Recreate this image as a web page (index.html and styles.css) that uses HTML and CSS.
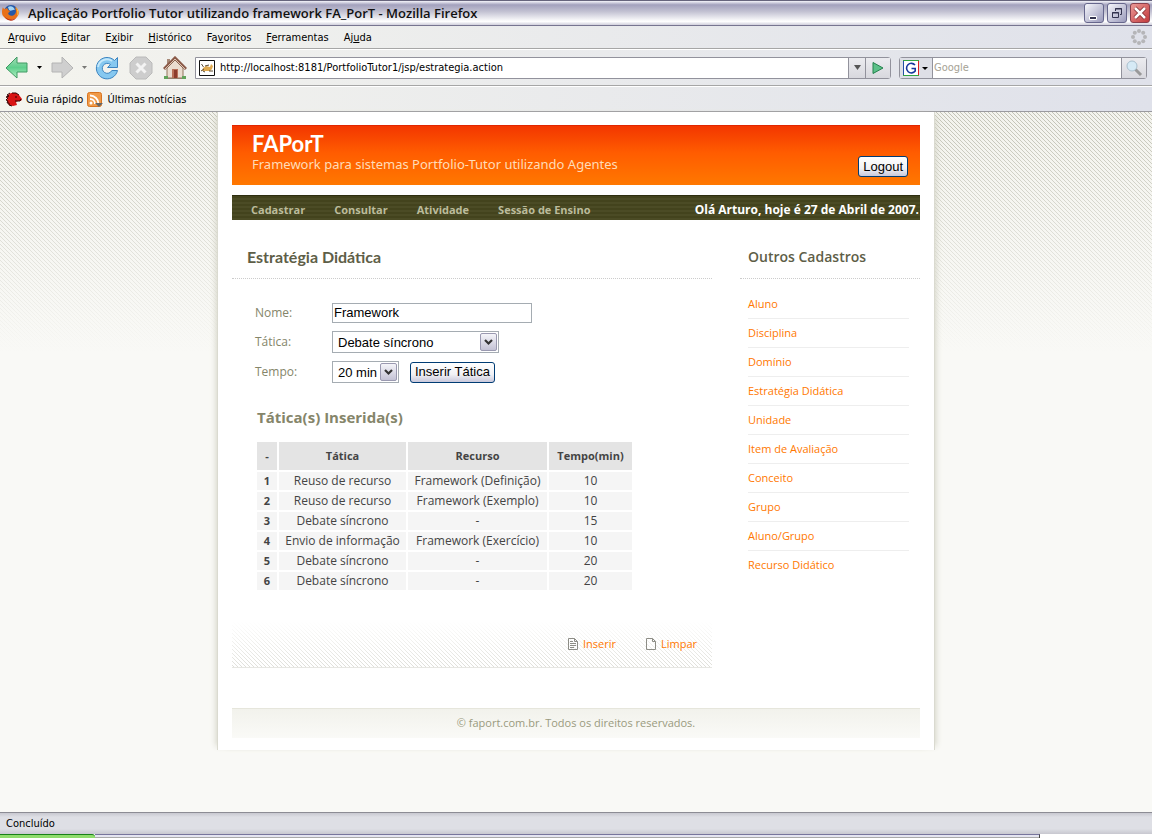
FILE: index.html
```html
<!DOCTYPE html>
<html lang="pt-BR">
<head>
<meta charset="utf-8">
<title>Aplicação Portfolio Tutor utilizando framework FA_PorT</title>
<link rel="stylesheet" href="styles.css">
</head>
<body>
<header class="chrome">
  <div class="titlebar">
    <svg class="ff" width="18" height="18" viewBox="0 0 18 18" aria-hidden="true"><circle cx="9" cy="8" r="7" fill="#2458a8"/><path d="M6 3c3-2 6 0 7 3-2-1-4 2-6 0z" fill="#a4d4f4"/><path d="M1 3c0 1 1 2 2 2 1-1 3-1 3 1l2 1c-1 2-3 2-1 4 3 2 7 0 7-4l-1-4c4 2 5 7 2 10-3 4-10 4-13 0C-1 11 0 5 1 3z" fill="#e8701a"/><path d="M2 12c3 4 9 5 13 1-3 5-10 5-13-1z" fill="#b92c10"/><path d="M14 3c3 3 3 7 1 9 1-3 0-6-1-9z" fill="#ffc93c"/></svg>
    <span class="title">Aplicação Portfolio Tutor utilizando framework FA_PorT - Mozilla Firefox</span>
    <button class="win" aria-label="Minimizar"><svg width="18" height="18" viewBox="0 0 18 18"><path d="M4.500 12.500h7v3h-7z" fill="#33334f" stroke="#fff"/></svg></button>
    <button class="win" aria-label="Restaurar"><svg width="18" height="18" viewBox="0 0 18 18" fill="none" stroke="#33334f"><path d="M7.500 7V4.500h6v6H12M7 5h7" /><path d="M4.500 8.500h6v5h-6zM4 9h7"/></svg></button>
    <button class="win close" aria-label="Fechar"><svg width="18" height="18" viewBox="0 0 18 18"><path d="M4 4l10 10M14 4L4 14" stroke="#7b2528" stroke-width="4"/><path d="M4 4l10 10M14 4L4 14" stroke="#fff" stroke-width="2.600"/></svg></button>
  </div>
  <nav class="menubar" aria-label="Menu do navegador">
    <button><u>A</u>rquivo</button><button><u>E</u>ditar</button><button>E<u>x</u>ibir</button><button><u>H</u>istórico</button><button>Fa<u>v</u>oritos</button><button><u>F</u>erramentas</button><button>Aj<u>u</u>da</button>
    <svg class="throbber" width="18" height="18" viewBox="0 0 18 18" fill="#b5b5b8" aria-hidden="true"><circle cx="9" cy="3" r="2"/><circle cx="13.200" cy="4.800" r="2"/><circle cx="15" cy="9" r="2"/><circle cx="13.200" cy="13.200" r="2"/><circle cx="9" cy="15" r="2"/><circle cx="4.800" cy="13.200" r="2"/><circle cx="3" cy="9" r="2"/><circle cx="4.800" cy="4.800" r="2"/></svg>
  </nav>
  <div class="toolbar">
    <button class="tool" aria-label="Voltar"><svg width="24" height="24" viewBox="0 0 24 24"><defs><linearGradient id="g" x2="0" y2="1"><stop stop-color="#a5dcb8"/><stop offset=".5" stop-color="#5fcf8c"/><stop offset="1" stop-color="#b4f0c4"/></linearGradient></defs><path d="M1 12L12 1v6h10v9H12v6z" fill="url(#g)" stroke="#3f9a62"/></svg></button>
    <svg class="drop" width="7" height="4" viewBox="0 0 7 4" aria-hidden="true"><path d="M1 0h5L3.500 3z"/></svg>
    <button class="tool" aria-label="Avançar"><svg width="24" height="24" viewBox="0 0 24 24"><path d="M23 12L12 1v6H2v9h10v6z" fill="#cfcfcf" stroke="#b4b4b4"/></svg></button>
    <svg class="drop dim" width="7" height="4" viewBox="0 0 7 4" aria-hidden="true"><path d="M1 0h5L3.500 3z"/></svg>
    <button class="tool" aria-label="Recarregar"><svg width="24" height="24" viewBox="0 0 24 24"><path d="M19.500 4.500L22.500 1.500V11.500H12.500L15.500 8.500A5 5 0 1 0 16.800 14.500H22.500A10.700 10.700 0 1 1 19.500 4.500z" fill="#86c8f0" stroke="#3c84c0" stroke-linejoin="round"/><path d="M3 11A9 9 0 0 1 17 5" fill="none" stroke="#c4e8fa" stroke-width="2"/></svg></button>
    <button class="tool stop" aria-label="Parar"><svg width="24" height="24" viewBox="0 0 24 24"><path d="M7 1h10l6 6v10l-6 6H7l-6-6V7z" fill="#cdcdcd" stroke="#bababa"/><path d="M7.500 7.500l9 9M16.500 7.500l-9 9" stroke="#f3f3f3" stroke-width="3"/></svg></button>
    <button class="tool home" aria-label="Página inicial"><svg width="24" height="24" viewBox="0 0 24 24"><path d="M4 3h3v7H4z" fill="#a88a78"/><path d="M4 12l8-8 8 8v10H4z" fill="#eadccf" stroke="#92745c"/><path d="M1 13L12 2l11 11" fill="none" stroke="#8a5a48" stroke-width="3"/><path d="M2 13L12 3l10 10" fill="none" stroke="#dcc4b4"/><path d="M9 13h6v9H9z" fill="#b87058"/><path d="M11 14h3v8h-3z" fill="#8d3c2c"/><path d="M1 20h4v3H1zM19 20h4v3h-4z" fill="#62a35a"/><path d="M5 22h14v1H5z" fill="#94806c"/></svg></button>
    <div class="address">
      <svg width="16" height="16" viewBox="0 0 16 16" aria-hidden="true"><path d="M.5.5h15v15H.5z" fill="#fff" stroke="#111"/><path d="M4 8l3-2 4 1 1-3 2 2-1 3-2 2-5 0-3 0z" fill="#e0aa50"/><path d="M2.500 4l2 3M2 11l3-2M10 11h4M6 6l4-1M4 11l2 1" fill="none" stroke="#5a4a35"/></svg>
      <input type="text" aria-label="Endereço" value="http://localhost:8181/PortfolioTutor1/jsp/estrategia.action">
      <button class="abtn" aria-label="Abrir histórico"><svg width="9" height="6" viewBox="0 0 9 6"><path d="M1 0h7L4.500 5z" fill="#555"/></svg></button>
      <button class="abtn go" aria-label="Ir"><svg width="14" height="14" viewBox="0 0 14 14"><path d="M2 1.500L12 7 2 12.500z" fill="#5cc088" stroke="#23814c"/></svg></button>
    </div>
    <div class="search">
      <button class="engine" aria-label="Mecanismo de busca"><svg width="27" height="16" viewBox="0 0 27 16"><path d="M1 1h14v14H1z" fill="#fff"/><path d="M.5 0v16" stroke="#2450a8"/><path d="M0 .5h16M0 15.500h16" stroke="#35a542"/><path d="M15.500 1v14" stroke="#d22"/><path d="M12 5a4.800 4.800 0 1 0 .2 6V8.500H8.500" fill="none" stroke="#16369c" stroke-width="1.600"/><path d="M19 7h6l-3 3z"/></svg></button>
      <input type="text" aria-label="Pesquisar" placeholder="Google">
      <button class="abtn go" aria-label="Buscar"><svg width="18" height="18" viewBox="0 0 18 18"><path d="M10 10l6 6" stroke="#999" stroke-width="3"/><circle cx="7" cy="7" r="5" fill="#d6eaf6" stroke="#a9bfcd"/></svg></button>
    </div>
  </div>
  <div class="bookmarks">
    <a href="#"><svg width="16" height="16" viewBox="0 0 16 16" aria-hidden="true"><path d="M2 3l3-2h5l3 2 3 4-1 2-3 0-2 1 1 3-4 1-4-1-2-4z" fill="#d81414"/><path d="M4 1L1 3l2 1-3 1 2 1-2 2 2 1-1 2 2 0 0 2 3 1M6 1h4l3 2M9 5h2M15 7l-1 2-5 0" fill="none" stroke="#300"/></svg>Guia rápido</a>
    <a href="#"><svg width="16" height="16" viewBox="0 0 16 16" aria-hidden="true"><rect x=".5" y=".5" width="14" height="14" rx="2" fill="#f09a48" stroke="#d87420"/><circle cx="4" cy="11" r="1.500" fill="#fff"/><path d="M3 7a5 5 0 0 1 5 5M3 3.500A8.500 8.500 0 0 1 11.500 12" fill="none" stroke="#fff" stroke-width="1.800"/><path d="M8 11h8l-4 4z" fill="#666"/></svg>Últimas notícias</a>
  </div>
</header>
<div class="view">
  <div class="page">
    <header class="banner">
      <div><h1>FAPorT</h1><p>Framework para sistemas Portfolio-Tutor utilizando Agentes</p></div>
      <button class="xp">Logout</button>
    </header>
    <nav class="nav" aria-label="Principal">
      <a href="#">Cadastrar</a><a href="#">Consultar</a><a href="#">Atividade</a><a href="#">Sessão de Ensino</a>
      <span>Olá Arturo, hoje é 27 de Abril de 2007.</span>
    </nav>
    <div class="columns">
      <main class="main">
        <h2>Estratégia Didática</h2>
        <form class="form">
          <div class="row"><label for="nome">Nome:</label><input id="nome" type="text" value="Framework"></div>
          <div class="row"><label for="tatica">Tática:</label><select id="tatica" class="wide"><option>Debate síncrono</option></select></div>
          <div class="row"><label for="tempo">Tempo:</label><select id="tempo"><option>20 min</option></select><button type="button" class="xp">Inserir Tática</button></div>
        </form>
        <h3>Tática(s) Inserida(s)</h3>
        <table class="grid">
          <thead><tr><th class="c1">-</th><th class="c2">Tática</th><th class="c3">Recurso</th><th class="c4">Tempo(min)</th></tr></thead>
          <tbody>
            <tr><th>1</th><td>Reuso de recurso</td><td>Framework (Definição)</td><td>10</td></tr>
            <tr><th>2</th><td>Reuso de recurso</td><td>Framework (Exemplo)</td><td>10</td></tr>
            <tr><th>3</th><td>Debate síncrono</td><td>-</td><td>15</td></tr>
            <tr><th>4</th><td>Envio de informação</td><td>Framework (Exercício)</td><td>10</td></tr>
            <tr><th>5</th><td>Debate síncrono</td><td>-</td><td>20</td></tr>
            <tr><th>6</th><td>Debate síncrono</td><td>-</td><td>20</td></tr>
          </tbody>
        </table>
        <div class="actions">
          <a href="#"><svg width="10" height="12" viewBox="0 0 10 12" fill="none" stroke="#8d8d86" aria-hidden="true"><path d="M.5.5h6l3 3v8h-9zM6.500.5v3h3M2 3.500h3M2 5.500h6M2 7.500h6M2 9.500h4"/></svg>Inserir</a>
          <a href="#"><svg width="10" height="12" viewBox="0 0 10 12" fill="none" stroke="#8d8d86" aria-hidden="true"><path d="M.5.5h6l3 3v8h-9zM6.500.5v3h3"/></svg>Limpar</a>
        </div>
      </main>
      <aside class="side">
        <h2>Outros Cadastros</h2>
        <ul>
          <li><a href="#">Aluno</a></li><li><a href="#">Disciplina</a></li><li><a href="#">Domínio</a></li><li><a href="#">Estratégia Didática</a></li><li><a href="#">Unidade</a></li><li><a href="#">Item de Avaliação</a></li><li><a href="#">Conceito</a></li><li><a href="#">Grupo</a></li><li><a href="#">Aluno/Grupo</a></li><li><a href="#">Recurso Didático</a></li>
        </ul>
      </aside>
    </div>
    <footer class="foot">© faport.com.br. Todos os direitos reservados.</footer>
  </div>
</div>
<div class="status">Concluído</div>
<div class="taskbar"><i class="start"></i><i class="tasks"></i></div>
</body>
</html>
```

FILE: styles.css
```css
:root {
  --hatch: url("data:image/svg+xml,%3Csvg xmlns='http://www.w3.org/2000/svg' width='4' height='4' shape-rendering='crispEdges'%3E%3Cpath fill='%23b0b0a2' d='M0 0h1v1H0zM1 1h1v1H1zM2 2h1v1H2zM3 3h1v1H3z'/%3E%3C/svg%3E");
  --arrow: url("data:image/svg+xml,%3Csvg xmlns='http://www.w3.org/2000/svg' width='17' height='18'%3E%3ClinearGradient id='a' x2='0' y2='1'%3E%3Cstop stop-color='%23f6f6fa'/%3E%3Cstop offset='1' stop-color='%23c2c1d4'/%3E%3C/linearGradient%3E%3Crect x='.5' y='.5' width='16' height='17' rx='1.500' fill='url(%23a)' stroke='%239a99b0'/%3E%3Cpath d='M5 7l3.500 3.500L12 7' fill='none' stroke='%23333' stroke-width='2.200'/%3E%3C/svg%3E");
}
* { box-sizing: border-box; }
body { margin: 0; min-height: 100vh; display: flex; flex-direction: column; font: 11px/16px "DejaVu Sans Condensed", "Liberation Sans", sans-serif; color: #000; background: #f9f9f6; }
button { font: inherit; color: inherit; padding: 0; border: 0; background: none; }
input, select { border-radius: 0; outline: 0; }
a { text-decoration: none; }
svg { display: block; flex: none; }
h1, h2, h3, p, ul { margin: 0; padding: 0; }

.chrome { background: linear-gradient(90deg, #f4f4ee, #dfe1ea); }
.titlebar { display: flex; align-items: center; gap: 3px; height: 26px; padding: 0 2px; border-top: 1px solid #66647c; border-bottom: 1px solid #777590; background: linear-gradient(#f4f4fa 0, #a3a1bd 16%, #c4c3d3 45%, #fff 85%, #d0cfdc); }
.title { flex: 1; padding-left: 5px; font: 600 13px/18px "Open Sans", sans-serif; color: #111; white-space: nowrap; }
.win { display: grid; place-items: center; width: 20px; height: 20px; border: 1px solid #66668c; border-radius: 3px; background: linear-gradient(135deg, #f6f6fb, #9a9abb); }
.close { background: linear-gradient(135deg, #ec9a98, #c23a3c); border-color: #8a3f4c; }
.menubar { display: flex; align-items: center; gap: 15px; height: 23px; padding: 0 4px 0 8px; border-bottom: 1px solid #a6a6a6; }
.menubar button { padding-top: 2px; }
.throbber { margin-left: auto; }
.toolbar { display: flex; align-items: center; height: 37px; padding: 0 5px; border-top: 1px solid #fff; border-bottom: 1px solid #a6a6a6; }
.drop { margin: 0 7px; }
.dim { opacity: .5; }
.stop, .home { margin-left: 10px; }
.address, .search { display: flex; align-items: center; height: 22px; border: 1px solid #92929c; border-radius: 0 3px 3px 0; background: #fff; }
.address { flex: 1; margin: 0 8px; padding-left: 3px; }
.search { width: 248px; border-radius: 3px; }
.address input, .search input { flex: 1; min-width: 0; border: 0; background: none; font: inherit; padding: 0 2px 0 5px; }
.search input { padding-left: 1px; }
.search input::placeholder { color: #a5a295; opacity: 1; }
.abtn { display: grid; place-items: center; width: 17px; height: 20px; border-left: 1px solid #92929c; background: linear-gradient(#ececf0, #d8d8de); }
.go { width: 25px; }
.engine { padding: 0 2px 0 3px; height: 20px; border-right: 1px solid #92929c; background: #dedfe6; }
.bookmarks { display: flex; align-items: center; gap: 4px; height: 26px; padding: 2px 6px 0; border-top: 1px solid #fff; border-bottom: 1px solid #9a9a9f; }
.bookmarks a { display: flex; align-items: center; gap: 4px; color: #000; }

.view { flex: 1; background: linear-gradient(#e8e8de55, #f9f9f6 240px), var(--hatch); }
.page { max-width: 718px; margin: 0 auto; padding: 13px 14px 12px; background: #fff; border: solid #dadad0; border-width: 0 1px; box-shadow: -5px 0 6px -4px #d4d4c6, 5px 0 6px -4px #d4d4c6; font-family: "Open Sans", "Noto Sans", sans-serif; }
.banner { display: flex; justify-content: space-between; align-items: flex-end; height: 60px; padding: 0 12px 8px 20px; border-top: 1px solid #e02600; background: linear-gradient(#f33600, #ff5c00 45%, #ff7800); color: #fff; }
.banner h1 { font: bold 22px/22px Lato, sans-serif; }
.banner p { padding-bottom: 4px; font: 13px/18px "Noto Sans", sans-serif; color: #ffdcb8; }
.xp { height: 21px; padding: 0 4px; border: 1px solid #003c74; border-radius: 3px; background: linear-gradient(#fff, #f1f1f5 60%, #c9c8db); color: #000; font: 13px/18px "Liberation Sans", sans-serif; }
.nav { display: flex; align-items: center; gap: 29px; height: 25px; margin-top: 10px; padding: 4px 1px 0 19px; border-top: 1px solid #2e2e10; background: repeating-linear-gradient(#43431d 0 2px, #4b4b25 2px 4px); font-weight: bold; }
.nav a { color: #bcbc9c; }
.nav span { margin-left: auto; color: #fff; font-size: 12px; }
.columns { display: flex; gap: 28px; }
.main { flex: 1; min-width: 0; }
.main h2, .side h2 { height: 59px; padding: 26px 15px 0; border-bottom: 1px dotted #ccc; color: #5e5e47; font: bold 16px/22px Lato, sans-serif; }
.side { width: 180px; }
.side h2 { padding: 26px 8px 0; font: 600 14px/22px "Open Sans", sans-serif; }
.form { padding: 24px 0 0 23px; }
.row { display: flex; align-items: center; height: 30px; color: #85856a; }
.row:first-child { height: 24px; align-items: flex-start; }
.row label { width: 77px; font-size: 12px; line-height: 20px; }
.row input { width: 200px; height: 20px; padding: 0 1px 1px; border: 1px solid #a5acb2; font: 13px "Liberation Sans", sans-serif; }
.row select { appearance: none; width: 67px; height: 22px; padding: 0 5px; border: 1px solid #a5acb2; color: #000; font: 13px "Liberation Sans", sans-serif; background: var(--arrow) right 1px center no-repeat, #fff; }
.row .wide { width: 167px; }
.row .xp { margin-left: 11px; }
.main h3 { margin: 20px 0 13px 25px; color: #85856a; font: bold 15px/20px "Open Sans", sans-serif; }
.grid { width: 379px; margin-left: 23px; border-spacing: 2px; table-layout: fixed; text-align: center; font-size: 12px; line-height: 16px; color: #444; }
.grid th, .grid td { padding: 1px 0; background: #f5f5f5; }
.grid thead th, .grid tbody th { font-size: 11px; }
.grid thead th { height: 28px; background: #e4e4e4; }
.c1 { width: 20px; } .c2 { width: 127px; } .c3 { width: 139px; }
.actions { display: flex; justify-content: flex-end; align-items: center; gap: 30px; height: 47px; margin-top: 29px; padding-right: 15px; border-bottom: 1px solid #e6e6e2; background: linear-gradient(#fff, #ffffff99), var(--hatch); }
.actions a { display: flex; align-items: center; gap: 5px; }
.actions a, .side a { color: #ff7800; }
.side ul { list-style: none; margin: 11px 11px 0 8px; }
.side li { height: 29px; padding-top: 6px; border-bottom: 1px solid #eee; }
.side li:last-child { border: 0; }
.foot { height: 30px; margin-top: 40px; border-top: 1px solid #e6e6dc; background: linear-gradient(#f2f2ec, #fafaf7); color: #9a9a7e; text-align: center; line-height: 28px; }
.status { height: 22px; padding: 0 6px; border-top: 1px solid #8c8c94; background: linear-gradient(#c8c8d0, #dedfe5 20%, #dedfe5 75%, #c8c8d0); line-height: 22px; }
.taskbar { display: flex; height: 4px; background: #fff; }
.start { width: 95px; border-top: 1px solid #178017; border-radius: 0 3px 0 0; background: #8fdc6c; }
.tasks { width: 82%; border-top: 1px solid #77759c; border-right: 1px solid #444; background: linear-gradient(#e4e4f0 67%, #aaa 67%); }
```
